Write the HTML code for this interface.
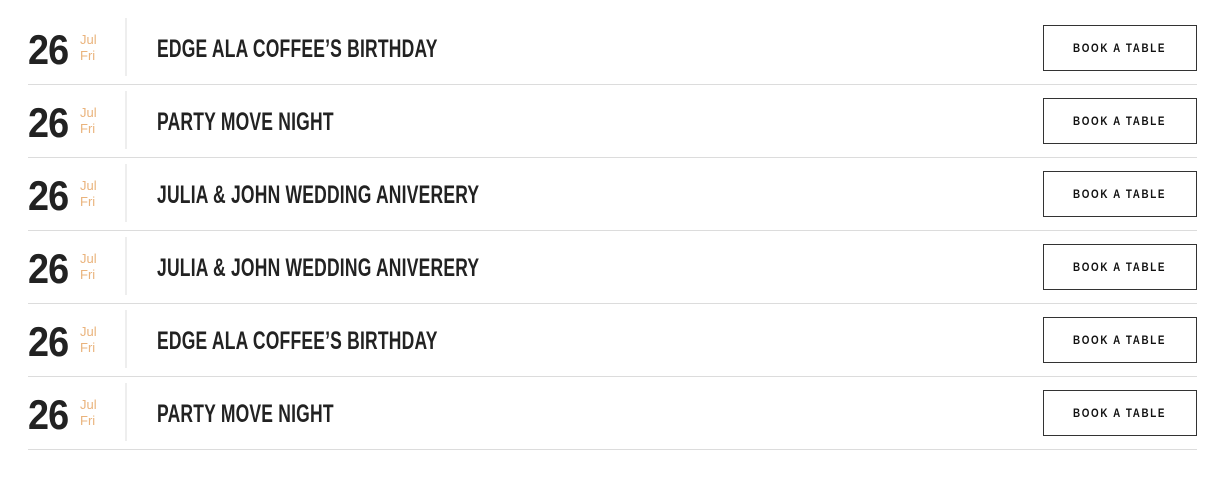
<!DOCTYPE html>
<html><head><meta charset="utf-8"><style>
body{margin:0;width:1230px;height:478px;background:#fff;overflow:hidden;font-family:"Liberation Sans",sans-serif;}
.row{position:absolute;left:28px;width:1169px;height:72px;border-bottom:1px solid #dcdcdc;}
.num{position:absolute;left:0;top:17px;font-size:42px;font-weight:bold;color:#222;line-height:42px;letter-spacing:-1px;transform:scaleX(0.9);transform-origin:left}
.m{position:absolute;left:52px;top:20px;font-size:13px;color:#eab37c;line-height:16px}
.div{position:absolute;left:97px;top:6px;width:2px;height:58px;background:#eee}
.t{position:absolute;left:129px;top:23px;font-size:25px;font-weight:bold;color:#222;line-height:28px;white-space:nowrap;letter-spacing:0.3px;transform:scaleX(0.7);transform-origin:left}
.b{position:absolute;left:1015px;top:13px;width:152px;height:44px;border:1px solid #333;}
.b span{position:absolute;left:29px;top:0;line-height:44px;font-size:12px;font-weight:bold;letter-spacing:2px;color:#111;white-space:nowrap;transform:scaleX(0.82);transform-origin:left}
</style></head><body>
<div class="row" style="top:12px"><div class="num">26</div><div class="m">Jul<br>Fri</div><div class="div"></div><div class="t">EDGE ALA COFFEE’S BIRTHDAY</div><div class="b"><span>BOOK A TABLE</span></div></div>
<div class="row" style="top:85px"><div class="num">26</div><div class="m">Jul<br>Fri</div><div class="div"></div><div class="t">PARTY MOVE NIGHT</div><div class="b"><span>BOOK A TABLE</span></div></div>
<div class="row" style="top:158px"><div class="num">26</div><div class="m">Jul<br>Fri</div><div class="div"></div><div class="t">JULIA &amp; JOHN WEDDING ANIVERERY</div><div class="b"><span>BOOK A TABLE</span></div></div>
<div class="row" style="top:231px"><div class="num">26</div><div class="m">Jul<br>Fri</div><div class="div"></div><div class="t">JULIA &amp; JOHN WEDDING ANIVERERY</div><div class="b"><span>BOOK A TABLE</span></div></div>
<div class="row" style="top:304px"><div class="num">26</div><div class="m">Jul<br>Fri</div><div class="div"></div><div class="t">EDGE ALA COFFEE’S BIRTHDAY</div><div class="b"><span>BOOK A TABLE</span></div></div>
<div class="row" style="top:377px"><div class="num">26</div><div class="m">Jul<br>Fri</div><div class="div"></div><div class="t">PARTY MOVE NIGHT</div><div class="b"><span>BOOK A TABLE</span></div></div>
</body></html>
